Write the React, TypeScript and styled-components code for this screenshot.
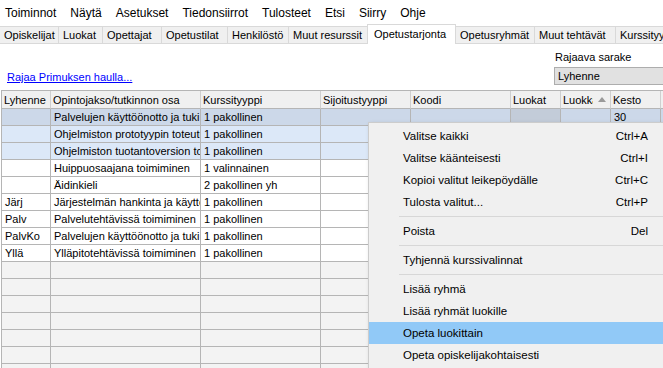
import React from 'react'
import styled, { createGlobalStyle } from 'styled-components'

const GlobalStyle = createGlobalStyle`
html, body {
  margin: 0;
  padding: 0;
  overflow: hidden;
  background: #ffffff;
  font-family: "Liberation Sans", Arial, sans-serif;
}
`

const menus = ['Toiminnot', 'Näytä', 'Asetukset', 'Tiedonsiirrot', 'Tulosteet', 'Etsi', 'Siirry', 'Ohje']

const tabs = [
  { text: 'Opiskelijat', w: 59 },
  { text: 'Luokat', w: 44 },
  { text: 'Opettajat', w: 59 },
  { text: 'Opetustilat', w: 66 },
  { text: 'Henkilöstö', w: 61 },
  { text: 'Muut resurssit', w: 79 },
  { text: 'Opetustarjonta', w: 89, active: true },
  { text: 'Opetusryhmät', w: 79 },
  { text: 'Muut tehtävät', w: 81 },
  { text: 'Kurssityypit', w: 72 },
]

const columns = ['Lyhenne', 'Opintojakso/tutkinnon osa', 'Kurssityyppi', 'Sijoitustyyppi', 'Koodi', 'Luokat', 'Luokka', 'Kesto', '']

type RowData = { short: string; name: string; type: string; kesto?: string; tone: 'sel' | 'light' | 'white' }

const rows: RowData[] = [
  { short: '', name: 'Palvelujen käyttöönotto ja tuki', type: '1 pakollinen', kesto: '30', tone: 'sel' },
  { short: '', name: 'Ohjelmiston prototyypin toteutus', type: '1 pakollinen', tone: 'light' },
  { short: '', name: 'Ohjelmiston tuotantoversion toteutus', type: '1 pakollinen', tone: 'light' },
  { short: '', name: 'Huippuosaajana toimiminen', type: '1 valinnainen', tone: 'white' },
  { short: '', name: 'Äidinkieli', type: '2 pakollinen yh', tone: 'white' },
  { short: 'Järj', name: 'Järjestelmän hankinta ja käyttöönotto', type: '1 pakollinen', tone: 'white' },
  { short: 'Palv', name: 'Palvelutehtävissä toimiminen', type: '1 pakollinen', tone: 'white' },
  { short: 'PalvKo', name: 'Palvelujen käyttöönotto ja tuki', type: '1 pakollinen', tone: 'white' },
  { short: 'Yllä', name: 'Ylläpitotehtävissä toimiminen', type: '1 pakollinen', tone: 'white' },
]

const emptyRows = Array.from({ length: 8 })

const menuItems = [
  { text: 'Valitse kaikki', key: 'Ctrl+A' },
  { text: 'Valitse käänteisesti', key: 'Ctrl+I' },
  { text: 'Kopioi valitut leikepöydälle', key: 'Ctrl+C' },
  { text: 'Tulosta valitut...', key: 'Ctrl+P' },
  { sep: true },
  { text: 'Poista', key: 'Del' },
  { sep: true },
  { text: 'Tyhjennä kurssivalinnat' },
  { sep: true },
  { text: 'Lisää ryhmä' },
  { text: 'Lisää ryhmät luokille' },
  { text: 'Opeta luokittain', active: true },
  { text: 'Opeta opiskelijakohtaisesti' },
]

const App = () => {
  return (
    <Page>
      <GlobalStyle />
      <MenuBar>
        {menus.map((m) => (
          <MenuItem key={m}>{m}</MenuItem>
        ))}
      </MenuBar>

      <TabStrip>
        {tabs.map((t) => (
          <Tab key={t.text} $w={t.w} $active={!!t.active}>
            {t.text}
          </Tab>
        ))}
      </TabStrip>

      <FilterBar>
        <SearchLink>Rajaa Primuksen haulla...</SearchLink>
        <FilterBox>
          <Label>Rajaava sarake</Label>
          <Combo>Lyhenne</Combo>
        </FilterBox>
      </FilterBar>

      <Grid>
        <HeadRow>
          {columns.map((c, i) => (
            <HeadCell key={i}>
              {c === 'Luokka' ? (
                <>
                  <Clip>{c}</Clip>
                  <SortArrow width="8" height="5" viewBox="0 0 8 5">
                    <path d="M0 5 L4 0 L8 5 Z" fill="#9a9a9a" />
                  </SortArrow>
                </>
              ) : (
                c
              )}
            </HeadCell>
          ))}
        </HeadRow>
        {rows.map((r, i) => (
          <Row key={i} $tone={r.tone}>
            <Cell>{r.short}</Cell>
            <Cell>{r.name}</Cell>
            <Cell>{r.type}</Cell>
            <Cell />
            <Cell />
            <Cell $dim={r.tone === 'sel'} />
            <Cell />
            <Cell>{r.kesto}</Cell>
            <Cell />
          </Row>
        ))}
        {emptyRows.map((_, i) => (
          <Row key={'e' + i} $tone="empty">
            {columns.map((_, j) => (
              <Cell key={j} />
            ))}
          </Row>
        ))}
      </Grid>

      <ContextMenu>
        {menuItems.map((m, i) =>
          m.sep ? (
            <Separator key={i} />
          ) : (
            <CtxItem key={i} $active={!!m.active}>
              <span>{m.text}</span>
              {m.key && <Shortcut>{m.key}</Shortcut>}
            </CtxItem>
          )
        )}
      </ContextMenu>
    </Page>
  )
}

export default App

const Page = styled.div`
position: relative;
width: 100vw;
height: 100vh;
overflow: hidden;
background: #ffffff;
color: #000000;
`

const MenuBar = styled.div`
height: 24px;
display: flex;
gap: 14px;
padding: 3px 0 0 5px;
box-sizing: border-box;
font-size: 12px;
line-height: 20px;
background: #ffffff;
`

const MenuItem = styled.div`
white-space: nowrap;
`

const TabStrip = styled.div`
height: 20px;
display: flex;
align-items: flex-end;
background: #ffffff;
`

const Tab = styled.div<{ $w: number; $active: boolean }>`
flex-shrink: 0;
width: ${(p) => p.$w}px;
height: ${(p) => (p.$active ? 20 : 18)}px;
box-sizing: border-box;
display: flex;
align-items: center;
padding: 0 0 ${(p) => (p.$active ? 1 : 0)}px ${(p) => (p.$active ? 6 : 4)}px;
font-size: 11px;
white-space: nowrap;
overflow: hidden;
background: ${(p) => (p.$active ? '#ffffff' : '#f0f0f0')};
border: 1px solid #d9d9d9;
border-left: none;
border-bottom: ${(p) => (p.$active ? 'none' : '1px solid #d9d9d9')};
${(p) => (p.$active ? 'border-left: 1px solid #d9d9d9; margin-left: -1px;' : '')}
`

const FilterBar = styled.div`
height: 46px;
box-sizing: border-box;
display: flex;
justify-content: space-between;
align-items: flex-end;
padding: 0 0 5px 7px;
`

const SearchLink = styled.a`
font-size: 11px;
line-height: 14px;
margin-bottom: 1px;
color: #0000ff;
text-decoration: underline;
cursor: pointer;
`

const FilterBox = styled.div`
width: 109px;
flex-shrink: 0;
display: flex;
flex-direction: column;
gap: 3px;
`

const Label = styled.div`
font-size: 11px;
line-height: 14px;
padding-left: 1px;
white-space: nowrap;
`

const Combo = styled.div`
width: 140px;
height: 18px;
box-sizing: border-box;
border: 1px solid #adadad;
background: #e1e1e1;
font-size: 11px;
line-height: 16px;
padding-left: 3px;
`

const cols = '49px 150px 120px 90px 100px 50px 50px 50px 1fr'

const Grid = styled.div`
margin-left: 1px;
border-top: 1px solid #b5b5b5;
border-left: 1px solid #b5b5b5;
font-size: 11px;
`

const HeadRow = styled.div`
display: grid;
grid-template-columns: ${cols};
height: 18px;
background: #f0f0f0;
`

const HeadCell = styled.div`
box-sizing: border-box;
display: flex;
align-items: center;
padding-left: 2px;
border-right: 1px solid #cfcfcf;
border-bottom: 1px solid #b5b5b5;
white-space: nowrap;
overflow: hidden;
`

const Clip = styled.span`
width: 30px;
overflow: hidden;
`

const SortArrow = styled.svg`
margin-left: 5px;
margin-top: -1px;
`

const rowBg = {
  sel: '#ccd8e9',
  light: '#dce8f8',
  white: '#ffffff',
  empty: '#f3f3f3',
}

const Row = styled.div<{ $tone: keyof typeof rowBg }>`
display: grid;
grid-template-columns: ${cols};
height: 17px;
background: ${(p) => rowBg[p.$tone]};
`

const Cell = styled.div<{ $dim?: boolean }>`
box-sizing: border-box;
padding-left: 3px;
line-height: 16px;
border-right: 1px solid #b5b5b5;
border-bottom: 1px solid #b5b5b5;
white-space: nowrap;
overflow: hidden;
${(p) => (p.$dim ? 'background: #c3ccd9;' : '')}
`

const ContextMenu = styled.div`
position: absolute;
left: 368px;
top: 122px;
width: 300px;
box-sizing: border-box;
padding: 2px 0;
background: #f0f0f0;
border: 1px solid #cccccc;
box-shadow: 2px 2px 4px rgba(0, 0, 0, 0.25);
font-size: 11.5px;
`

const CtxItem = styled.div<{ $active: boolean }>`
height: 22px;
display: flex;
align-items: center;
justify-content: space-between;
padding: 0 19px 0 34px;
background: ${(p) => (p.$active ? '#91c9f7' : 'transparent')};
white-space: nowrap;
`

const Shortcut = styled.span`
text-align: right;
`

const Separator = styled.div`
height: 7px;
margin-left: 30px;
display: flex;
align-items: center;
&::after {
  content: '';
  flex: 1;
  height: 1px;
  background: #d7d7d7;
}
`
